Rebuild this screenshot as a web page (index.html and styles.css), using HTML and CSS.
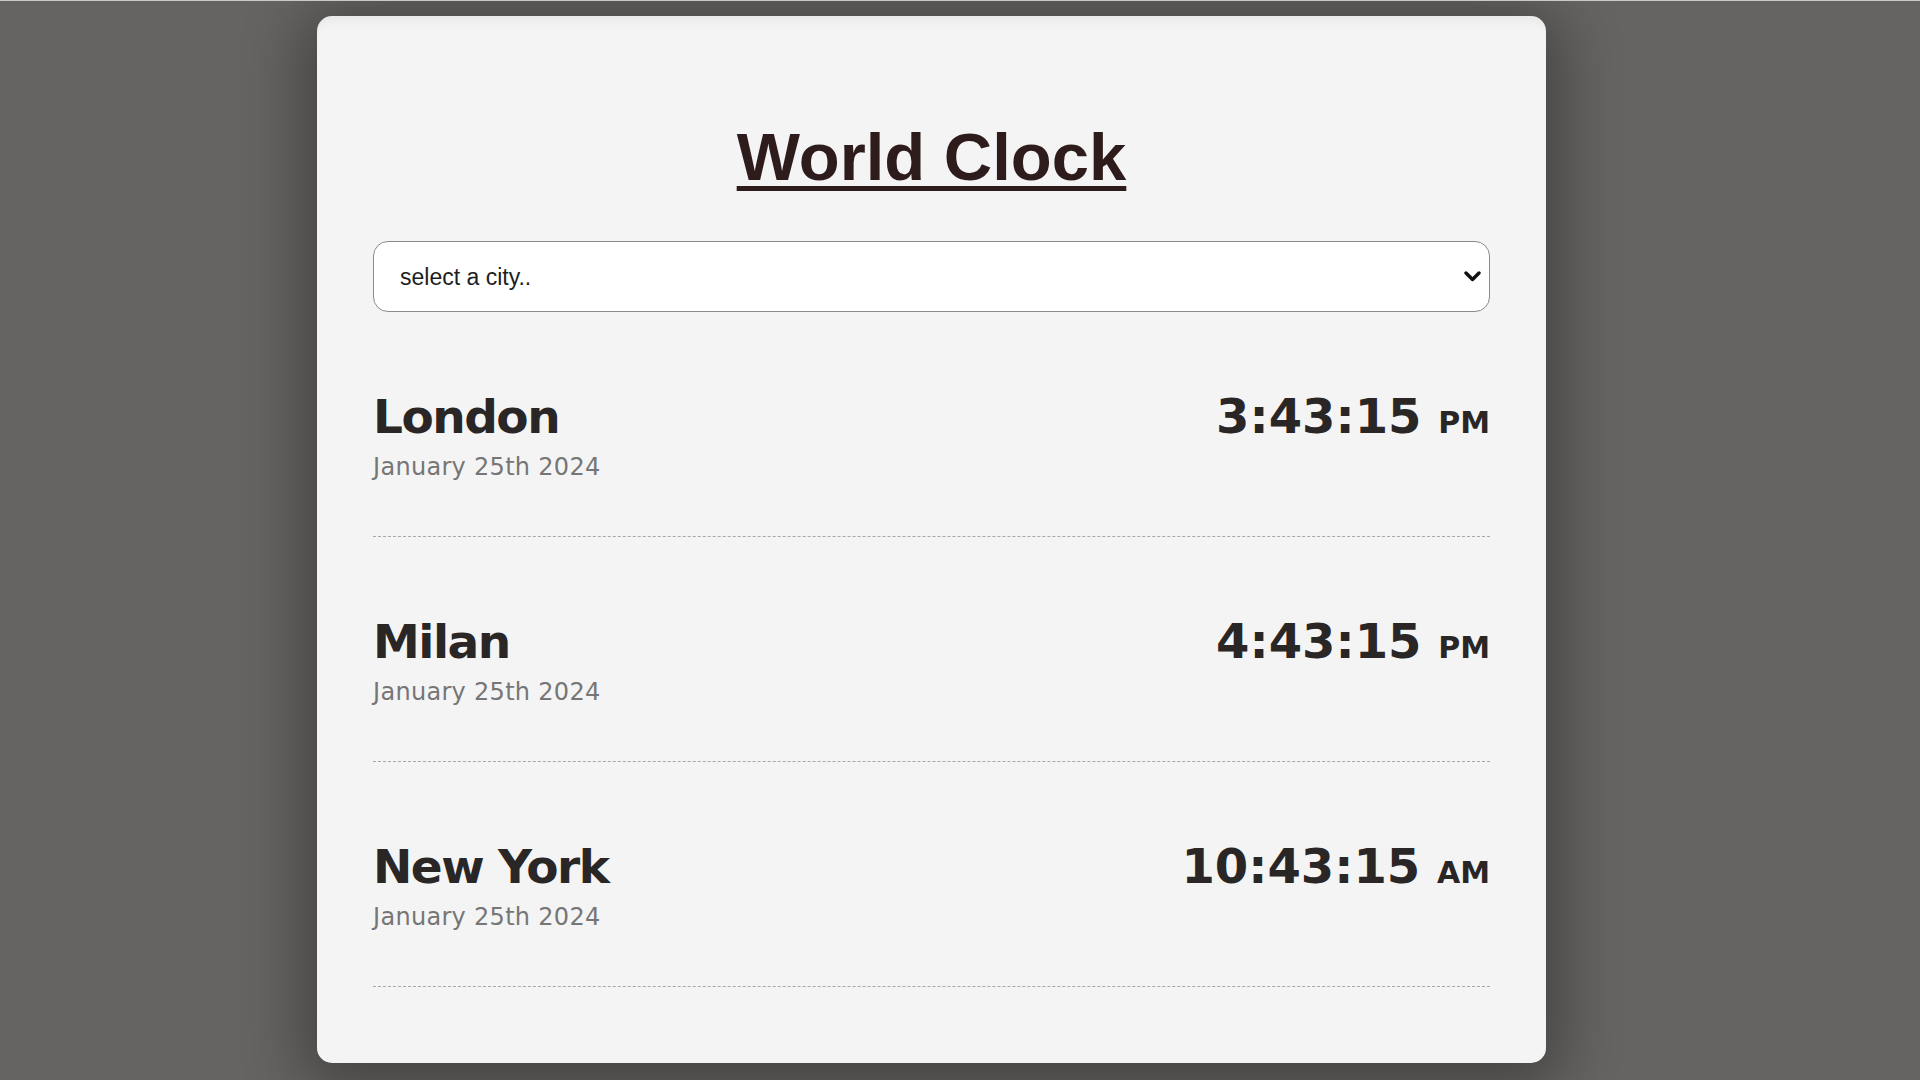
FILE: index.html
```html
<!DOCTYPE html>
<html lang="en">
<head>
<meta charset="utf-8">
<title>World Clock</title>
<link rel="stylesheet" href="styles.css">
</head>
<body>
<div class="page">
  <main class="card">
    <h1 class="title">World Clock</h1>
    <div class="select-wrap">
      <select class="city-select">
        <option>select a city..</option>
        <option>London</option>
        <option>Milan</option>
        <option>New York</option>
      </select>
      <svg class="chevron" width="17" height="11" viewBox="0 0 17 11" aria-hidden="true"><polyline points="2,2 8.5,8.5 15,2" fill="none" stroke="#111" stroke-width="3.4" stroke-linecap="round" stroke-linejoin="round"/></svg>
    </div>
    <div class="cities">
      <div class="city">
        <div class="city-info">
          <div class="city-name">London</div>
          <div class="city-date">January 25th 2024</div>
        </div>
        <div class="city-time">3:43:15 <small>PM</small></div>
      </div>
      <div class="city">
        <div class="city-info">
          <div class="city-name">Milan</div>
          <div class="city-date">January 25th 2024</div>
        </div>
        <div class="city-time">4:43:15 <small>PM</small></div>
      </div>
      <div class="city">
        <div class="city-info">
          <div class="city-name">New York</div>
          <div class="city-date">January 25th 2024</div>
        </div>
        <div class="city-time">10:43:15 <small>AM</small></div>
      </div>
    </div>
  </main>
</div>
</body>
</html>
```
FILE: styles.css
```css
html, body {
  margin: 0;
  padding: 0;
  height: 100%;
}
body {
  background: #666462;
  border-top: 1px solid #c9c9c9;
  box-sizing: border-box;
  overflow: hidden;
}
.page {
  padding: 15px 0 0 317px;
}
.card {
  width: 1229px;
  box-sizing: border-box;
  background: #f4f4f4;
  border-radius: 15px;
  padding: 102px 56px 76px 56px;
  box-shadow: 0 10px 60px 16px rgba(0, 0, 0, 0.32), inset 0 12px 14px -10px rgba(0, 0, 0, 0.07);
}
.title {
  margin: 0;
  text-align: center;
  font-family: "Liberation Sans", Arial, sans-serif;
  font-weight: bold;
  font-size: 67px;
  line-height: 77px;
  color: #2e1c1c;
  text-decoration: underline;
  text-decoration-thickness: 5px;
  text-underline-offset: 6px;
}
.select-wrap {
  position: relative;
  margin-top: 46px;
}
.city-select {
  display: block;
  width: 100%;
  height: 71px;
  box-sizing: border-box;
  appearance: none;
  -webkit-appearance: none;
  background: #ffffff;
  border: 1.5px solid #8a8a8a;
  border-radius: 15px;
  padding: 0 40px 0 26px;
  font-family: "Liberation Sans", Arial, sans-serif;
  font-size: 23px;
  color: #1e1e1e;
  outline: none;
}
.chevron {
  position: absolute;
  right: 9px;
  top: 30px;
  pointer-events: none;
}
.city {
  display: flex;
  justify-content: space-between;
  align-items: baseline;
  padding: 77px 0 55px 0;
  border-bottom: 1px dashed #a8a8a8;
}
.city-name {
  font-family: "DejaVu Sans", Verdana, sans-serif;
  font-weight: bold;
  font-size: 47px;
  line-height: 55px;
  letter-spacing: -1.5px;
  color: #2a2625;
}
.city-date {
  margin-top: 9px;
  font-family: "DejaVu Sans", Verdana, sans-serif;
  font-size: 24px;
  line-height: 28px;
  letter-spacing: 0.3px;
  color: #767676;
}
.city-time {
  font-family: "DejaVu Sans", Verdana, sans-serif;
  font-weight: bold;
  font-size: 48px;
  line-height: 55px;
  color: #2a2625;
}
.city-time small {
  font-size: 30px;
}
```
